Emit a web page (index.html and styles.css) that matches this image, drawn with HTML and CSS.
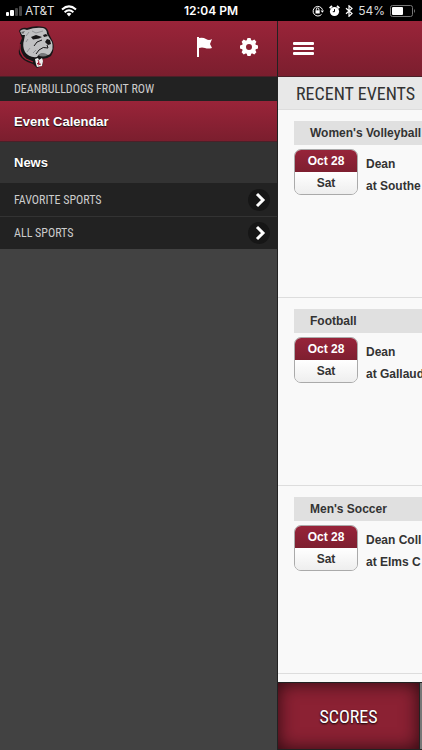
FILE: index.html
```html
<!DOCTYPE html>
<html lang="en">
<head>
    <meta charset="UTF-8">
    <meta name="viewport" content="width=device-width, initial-scale=1.0">
    <title>DeanBulldogs Front Row</title>
    <link rel="stylesheet" href="styles.css">
</head>
<body>

<div class="status-bar">
    <div class="status-side">
        <svg width="19" height="10" viewBox="0 0 19 10" fill="#fff">
            <rect x="0" y="6" width="3" height="4" rx="1"/>
            <rect x="4" y="4" width="4" height="6" rx="1"/>
            <rect x="9" y="2" width="3" height="8" rx="1" fill="#444"/>
            <rect x="13" y="0" width="3" height="10" rx="1" fill="#444"/>
        </svg>
        <span>AT&amp;T</span>
        <svg class="wifi" width="16" height="12" viewBox="0 0 16 12" fill="none" stroke="#fff" stroke-width="2">
            <path d="M1 4.500Q8 -1.800 15 4.500"/>
            <path d="M3.600 7.200Q8 3.400 12.400 7.200"/>
            <path d="M5.600 8.800Q8 6.800 10.400 8.800L8 11.500z" fill="#fff" stroke="none"/>
        </svg>
    </div>
    <div class="clock">12:04 PM</div>
    <div class="status-side status-right">
        <svg width="12" height="12" viewBox="0 0 12 12" fill="none" stroke="#fff">
            <path d="M9.600 9.300A4.800 4.800 0 1 1 10.500 4.800"/>
            <path d="M8.600 5.500h3.400l-1.700 2.300z" fill="#fff" stroke="none"/>
            <rect x="3.500" y="5.300" width="4.200" height="3.200" fill="#fff" stroke="none"/>
            <path d="M4.300 5.500V4.200a1.300 1.300 0 0 1 2.600 0v1.300"/>
        </svg>
        <svg width="11" height="12" viewBox="0 0 11 12">
            <circle cx="5.500" cy="6.500" r="4.600" fill="#fff"/>
            <path d="M.6 3.200L3 1M10.400 3.200L8 1" stroke="#fff" stroke-width="1.800"/>
            <path d="M5.500 4.200v2.500H3.800" fill="none" stroke="#000"/>
        </svg>
        <svg width="8" height="12" viewBox="0 0 8 12" fill="none" stroke="#fff" stroke-width="1.200">
            <path d="M1 3.200l6 5.400-3 2.700V.8l3 2.600L1 8.800"/>
        </svg>
        <span>54%</span>
        <svg width="26" height="12" viewBox="0 0 26 12">
            <rect x=".5" y=".5" width="22" height="11" rx="2" fill="none" stroke="#777"/>
            <rect x="2" y="2" width="11" height="8" rx="1" fill="#fff"/>
            <path d="M24 4q2 2 0 4z" fill="#777"/>
        </svg>
    </div>
</div>

<div class="app">
    <nav class="sidebar">
        <div class="toolbar">
            <svg class="logo" width="36" height="42" viewBox="0 0 36 42">
                <path d="M1 5Q3 1 9 2Q17-1 26 1Q30 2 31 8L35 16Q37 24 33 30Q29 33 24 33L25 39 19 42 15 38Q4 35 1 28Q0 20 4 12z" fill="#171517"/>
                <path d="M2 18Q1 28 8 33L15 36" fill="none" stroke="#a52036" stroke-width="1.300"/>
                <path d="M2 5Q5 2 9 4Q17 1 25 2Q29 3 29 8L34 16Q36 23 32 28Q30 30 27 28Q22 26 19 31Q11 32 7 26Q4 20 6 14L7 9 4 9z" fill="#c0c0c2"/>
                <path d="M3 6l4-1-2 3z" fill="#66676a"/>
                <path d="M8 10l3-4M14 5l4 2 7-2M8 16l2-3M9 26l3-4M15 27l3-3" fill="none" stroke="#929396"/>
                <path d="M13 11l5-2 6 2-3 1.500-6 1z" fill="#171517"/>
                <path d="M25 9l3-1 2 2-4 1z" fill="#171517"/>
                <path d="M29 13l3 1 1 4-3 1-3-3z" fill="#171517"/>
                <path d="M29 19l1 3q-5-2-9 2l-3 4M24 14q-6 1-8 6" fill="none" stroke="#171517"/>
                <path d="M20 29q5-4 10 0-5 3-10 0z" fill="#77787b"/>
                <path d="M17 33l3-1 1 2 3-2 1 3-1 5-5 1-1-3z" fill="#eee"/>
                <path d="M20 34l1 2-2 2 3-1M20 39l3-1" fill="none" stroke="#a52036"/>
            </svg>
            <button class="icon-button" type="button" aria-label="Favorite teams">
                <svg width="16" height="22" viewBox="0 0 16 22" fill="#fff">
                    <path d="M0 1h2v20H0zM2 2q4-1 7 1t6 0l-2 5 2 4q-4 1-7 0t-6 0z"/>
                </svg>
            </button>
            <button class="icon-button" type="button" aria-label="Settings">
                <svg width="20" height="20" viewBox="-10 -10 20 20">
                    <circle r="5" fill="none" stroke="#fff" stroke-width="4"/>
                    <path d="M-1.500-9h3l1 3h-5zM-1.500 9h3l1-3h-5zM-9-1.500v3l3 1v-5zM9-1.500v3l-3 1v-5z" fill="#fff"/>
                    <path d="M-1.500-9h3l1 3h-5zM-1.500 9h3l1-3h-5zM-9-1.500v3l3 1v-5zM9-1.500v3l-3 1v-5z" fill="#fff" transform="rotate(45)"/>
                </svg>
            </button>
        </div>
        <h2 class="nav-heading">DEANBULLDOGS FRONT ROW</h2>
        <a class="nav-link active" href="#calendar">Event Calendar</a>
        <a class="nav-link" href="#news">News</a>
        <button class="nav-group" type="button">
            FAVORITE SPORTS
            <svg width="22" height="22" viewBox="0 0 22 22">
                <circle cx="11" cy="11" r="11" fill="#161616"/>
                <path d="M9 5l6 6-6 6" fill="none" stroke="#fff" stroke-width="3"/>
            </svg>
        </button>
        <button class="nav-group" type="button">
            ALL SPORTS
            <svg width="22" height="22" viewBox="0 0 22 22">
                <circle cx="11" cy="11" r="11" fill="#161616"/>
                <path d="M9 5l6 6-6 6" fill="none" stroke="#fff" stroke-width="3"/>
            </svg>
        </button>
    </nav>

    <main class="content">
        <div class="toolbar">
            <button class="icon-button" type="button" aria-label="Menu">
                <svg width="21" height="14" viewBox="0 0 21 14" fill="#fff">
                    <rect width="21" height="3" rx="1"/>
                    <rect y="5" width="21" height="3" rx="1"/>
                    <rect y="10" width="21" height="3" rx="1"/>
                </svg>
            </button>
        </div>
        <h1 class="page-title">RECENT EVENTS</h1>
        <div class="events">
            <section class="event">
                <h3>Women's Volleyball</h3>
                <div class="event-body">
                    <div class="date"><span class="day">Oct 28</span><span class="weekday">Sat</span></div>
                    <div class="teams"><div>Dean</div><div>at Southe</div></div>
                </div>
            </section>
            <section class="event">
                <h3>Football</h3>
                <div class="event-body">
                    <div class="date"><span class="day">Oct 28</span><span class="weekday">Sat</span></div>
                    <div class="teams"><div>Dean</div><div>at Gallaud</div></div>
                </div>
            </section>
            <section class="event">
                <h3>Men's Soccer</h3>
                <div class="event-body">
                    <div class="date"><span class="day">Oct 28</span><span class="weekday">Sat</span></div>
                    <div class="teams"><div>Dean Coll</div><div>at Elms C</div></div>
                </div>
            </section>
        </div>
        <div class="tabs">
            <button class="tab active" type="button">SCORES</button>
            <button class="tab" type="button" aria-label="Upcoming"></button>
        </div>
    </main>
</div>

</body>
</html>
```
FILE: styles.css
```css
* {
    box-sizing: border-box;
}
body {
    margin: 0;
    height: 100vh;
    display: flex;
    flex-direction: column;
    overflow: hidden;
    background: #000;
    color: #333;
    font-family: "Liberation Sans", Arial, sans-serif;
    font-size: 13px;
}
h1, h2, h3 {
    margin: 0;
}
button {
    border: none;
    padding: 0;
    background: none;
    cursor: pointer;
}
svg {
    display: block;
    flex: none;
}

/* phone status bar */
.status-bar {
    flex: none;
    display: flex;
    align-items: center;
    height: 21px;
    padding: 0 6px;
    color: #ddd;
    font-family: Inter, sans-serif;
    font-size: 12px;
}
.status-side {
    flex: 1;
    display: flex;
    align-items: center;
}
.wifi {
    margin-left: 7px;
}
.clock {
    color: #fff;
    font-weight: 600;
}
.status-right {
    justify-content: flex-end;
    gap: 5px;
}

.app {
    flex: 1;
    min-height: 0;
    display: flex;
}
.sidebar {
    flex: none;
    width: 278px;
    background: #424242;
    border-right: 1px solid #222;
}
.toolbar {
    flex: none;
    display: flex;
    align-items: center;
    gap: 26px;
    height: 56px;
    padding: 0 18px;
    background: linear-gradient(#9a2439, #7b1e2e);
    border-bottom: 1px solid #4b2028;
}
.sidebar .toolbar {
    padding-bottom: 4px;
}
.content .toolbar {
    padding: 0 15px;
}
.logo {
    margin-right: auto;
}

/* side menu */
.nav-heading,
.nav-group {
    display: flex;
    align-items: center;
    width: 100%;
    background: #222;
    color: #ccc;
    font-family: "Liberation Sans Narrow", "Roboto Condensed", Roboto, sans-serif;
    font-size: 12px;
    font-weight: 400;
}
.nav-heading {
    height: 24px;
    padding: 0 14px;
}
.nav-group {
    justify-content: space-between;
    height: 33px;
    padding: 0 7px 0 14px;
}
.nav-group + .nav-group {
    border-top: 1px solid #333;
}
.nav-link {
    display: block;
    height: 41px;
    padding: 0 14px;
    background: #333;
    color: #fff;
    font-weight: bold;
    line-height: 41px;
    text-decoration: none;
    text-shadow: 0 1px 1px #111;
}
.nav-link.active {
    background: linear-gradient(#9a2439, #7b1e2e);
    border-bottom: 1px solid #4b2028;
}

/* events list */
.content {
    flex: 1;
    min-width: 0;
    display: flex;
    flex-direction: column;
    overflow: hidden;
    background: #f9f9f9;
    white-space: nowrap;
}
.page-title {
    flex: none;
    height: 33px;
    padding-left: 18px;
    background: #e8e8e8;
    border-bottom: 1px solid #ddd;
    font-family: "Liberation Sans Narrow", "Roboto Condensed", Roboto, sans-serif;
    font-size: 18px;
    font-weight: 400;
    line-height: 33px;
}
.events {
    flex: 1;
    min-height: 0;
    overflow: hidden;
}
.event {
    height: 188px;
    padding: 11px 0 0 16px;
    border-bottom: 1px solid #ddd;
}
.event h3 {
    height: 24px;
    padding-left: 16px;
    background: #e0e0e0;
    font-size: 12px;
    line-height: 24px;
}
.event-body {
    display: flex;
    gap: 8px;
    padding-top: 4px;
    font-size: 12px;
    font-weight: bold;
}
.date {
    flex: none;
    width: 64px;
    height: 46px;
    border: 1px solid #aaa;
    border-radius: 7px;
    overflow: hidden;
    text-align: center;
    line-height: 22px;
}
.day {
    display: block;
    background: linear-gradient(#97243a, #7e1f30);
    color: #fff;
}
.weekday {
    display: block;
    background: linear-gradient(#fff, #eee);
}
.teams {
    padding-top: 4px;
    line-height: 22px;
}

/* bottom tabs */
.tabs {
    flex: none;
    display: flex;
    height: 68px;
    padding-bottom: 1px;
    background: #222;
    border-top: 1px solid #222;
}
.tab {
    flex: 1;
    background: #777;
}
.tab.active {
    flex: none;
    width: 141px;
    margin-right: 1px;
    background: #8b2133;
    box-shadow: inset 0 0 18px #2a0a10;
    color: #fff;
    font-family: "Liberation Sans Narrow", "Roboto Condensed", Roboto, sans-serif;
    font-size: 18px;
    text-shadow: 0 1px 2px #000;
}
```
